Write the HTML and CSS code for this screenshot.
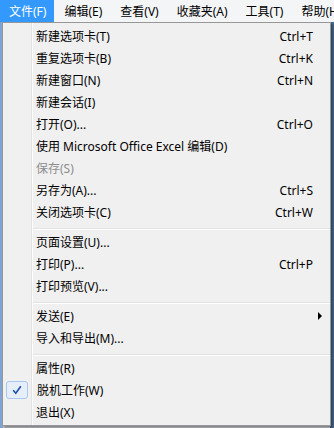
FILE: index.html
```html
<!DOCTYPE html>
<html lang="zh-CN">

<head>
    <meta charset="UTF-8">
    <meta name="viewport" content="width=device-width, initial-scale=1.0">
    <title>文件菜单</title>
    <link rel="stylesheet" href="styles.css">
</head>

<body>
    <div class="menubar">
        <span class="barItem active">文件(F)</span>
        <span class="barItem">编辑(E)</span>
        <span class="barItem">查看(V)</span>
        <span class="barItem">收藏夹(A)</span>
        <span class="barItem">工具(T)</span>
        <span class="barItem">帮助(H)</span>
    </div>

    <div class="dropdown">
        <div class="row"><span class="label">新建选项卡(T)</span><span class="key">Ctrl+T</span></div>
        <div class="row"><span class="label">重复选项卡(B)</span><span class="key">Ctrl+K</span></div>
        <div class="row"><span class="label">新建窗口(N)</span><span class="key">Ctrl+N</span></div>
        <div class="row"><span class="label">新建会话(I)</span></div>
        <div class="row"><span class="label">打开(O)...</span><span class="key">Ctrl+O</span></div>
        <div class="row"><span class="label">使用 Microsoft Office Excel 编辑(D)</span></div>
        <div class="row disabled"><span class="label">保存(S)</span></div>
        <div class="row"><span class="label">另存为(A)...</span><span class="key">Ctrl+S</span></div>
        <div class="row"><span class="label">关闭选项卡(C)</span><span class="key">Ctrl+W</span></div>
        <div class="sep"></div>
        <div class="row"><span class="label">页面设置(U)...</span></div>
        <div class="row"><span class="label">打印(P)...</span><span class="key">Ctrl+P</span></div>
        <div class="row"><span class="label">打印预览(V)...</span></div>
        <div class="sep"></div>
        <div class="row"><span class="label">发送(E)</span><span class="arrow"></span></div>
        <div class="row"><span class="label">导入和导出(M)...</span></div>
        <div class="sep"></div>
        <div class="row"><span class="label">属性(R)</span></div>
        <div class="row checked">
            <span class="check">
                <svg width="10" height="10" viewBox="0 0 10 10">
                    <path d="M1.2 5.2 L3.8 8.2 L8.8 1.2" fill="none" stroke="#1c4fa8" stroke-width="1.6" />
                </svg>
            </span>
            <span class="label">脱机工作(W)</span>
        </div>
        <div class="row"><span class="label">退出(X)</span></div>
    </div>
</body>

</html>
```

FILE: styles.css
```css
body {
    margin: 0;
    padding: 0;
    width: 334px;
    height: 428px;
    overflow: hidden;
    font-family: "Noto Sans", "Noto Sans CJK SC", sans-serif;
    font-size: 12px;
    color: #000;
    background: linear-gradient(to right, #7fa4d4 0, #7fa4d4 3px, #c9cdd2 3px, #c9cdd2 330px, #4a6a94 330px);
}

.menubar {
    display: flex;
    height: 22px;
    background-color: #f4f5f7;
    white-space: nowrap;
    overflow: hidden;
}

.barItem {
    display: flex;
    align-items: center;
    padding: 0 8px 0 9px;
    margin-right: 1px;
}

.barItem.active {
    background-color: #3399ff;
    color: #fff;
}

.dropdown {
    width: 327px;
    margin-left: 2px;
    padding: 2px 0;
    border: 1px solid #979797;
    background: linear-gradient(to right, #f0f0f0 28px, #e2e3e3 28px, #e2e3e3 29px, #fff 29px, #fff 30px, #f0f0f0 30px);
    box-shadow: 2px 2px 2px rgba(0, 0, 0, 0.35);
}

.row {
    display: flex;
    align-items: center;
    height: 22px;
    padding: 0 8px 0 33px;
}

.row.disabled {
    color: #8d8d8d;
}

.key {
    margin-left: auto;
    margin-right: 9px;
}

.arrow {
    margin-left: auto;
    width: 0;
    height: 0;
    border-top: 4px solid transparent;
    border-bottom: 4px solid transparent;
    border-left: 4px solid #000;
}

.row.checked {
    padding-left: 3px;
}

.check {
    display: flex;
    align-items: center;
    justify-content: center;
    width: 20px;
    height: 16px;
    margin-right: 9px;
    border: 1px solid #a8c8f0;
    border-radius: 3px;
    background-color: #e6eefa;
}

.sep {
    height: 0;
    margin: 5px 0 1px 30px;
    border-top: 1px solid #e2e3e3;
    border-bottom: 1px solid #fff;
}
```
